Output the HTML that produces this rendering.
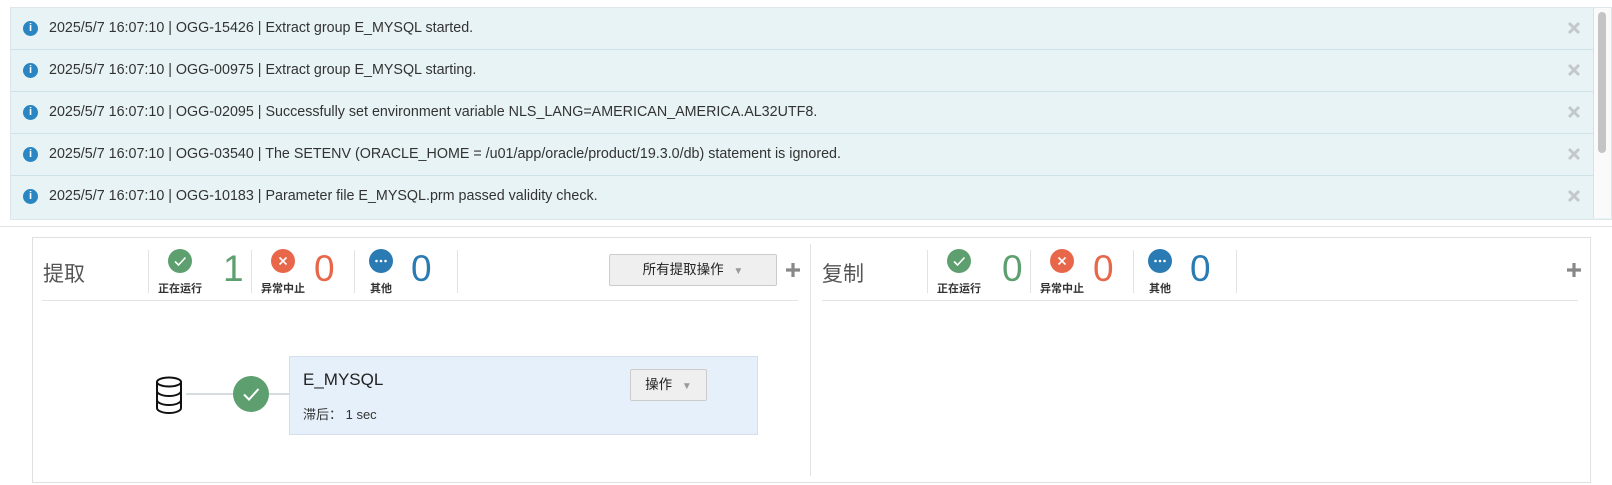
<!DOCTYPE html>
<html><head><meta charset="utf-8"><style>
body{margin:0;width:1612px;height:485px;background:#fff;position:relative;overflow:hidden;font-family:"Liberation Sans","Noto Sans CJK SC",sans-serif;color:#333}
.a{position:absolute}
.row{position:absolute;left:11px;width:1582px;height:41px;border-bottom:1px solid #cfe2e7;background:#e8f3f6}
.row .t{position:absolute;left:38px;top:12px;font-size:14.3px;color:#333;white-space:nowrap}
.row .i{position:absolute;left:12px;top:13px;width:15px;height:15px;border-radius:50%;background:#2a86c3;color:#fff;font:bold 11px/15px "Liberation Sans",sans-serif;text-align:center}
.row .x{position:absolute;left:1556px;top:13px}
.hd{font-size:21px;color:#555}
.dv{position:absolute;width:1px;background:#e2e2e2;top:250px;height:43px}
.ci{position:absolute;width:24px;height:24px;border-radius:50%;top:249px}
.lb{position:absolute;top:280px;font-size:11px;font-weight:bold;color:#333;width:60px;text-align:center}
.num{position:absolute;top:248px;font-size:37px;font-weight:300}
</style></head><body>
<div class="a" style="left:10px;top:7px;width:1600px;height:211px;border:1px solid #dde7ea;background:#e8f3f6"></div>
<div class="a" style="left:1593px;top:8px;width:17px;height:210px;background:#fafafa;border-left:1px solid #dde"></div>
<div class="a" style="left:1598px;top:12px;width:8px;height:141px;border-radius:4px;background:#c4c4c4"></div>
<div class="row" style="top:8px"><div class="i">i</div><div class="t">2025/5/7 16:07:10 | OGG-15426 | Extract group E_MYSQL started.</div><svg class="x" width="14" height="14"><path d="M2 2L12 12M12 2L2 12" stroke="#c3c8cb" stroke-width="3"/></svg></div>
<div class="row" style="top:50px"><div class="i">i</div><div class="t">2025/5/7 16:07:10 | OGG-00975 | Extract group E_MYSQL starting.</div><svg class="x" width="14" height="14"><path d="M2 2L12 12M12 2L2 12" stroke="#c3c8cb" stroke-width="3"/></svg></div>
<div class="row" style="top:92px"><div class="i">i</div><div class="t">2025/5/7 16:07:10 | OGG-02095 | Successfully set environment variable NLS_LANG=AMERICAN_AMERICA.AL32UTF8.</div><svg class="x" width="14" height="14"><path d="M2 2L12 12M12 2L2 12" stroke="#c3c8cb" stroke-width="3"/></svg></div>
<div class="row" style="top:134px"><div class="i">i</div><div class="t">2025/5/7 16:07:10 | OGG-03540 | The SETENV (ORACLE_HOME = /u01/app/oracle/product/19.3.0/db) statement is ignored.</div><svg class="x" width="14" height="14"><path d="M2 2L12 12M12 2L2 12" stroke="#c3c8cb" stroke-width="3"/></svg></div>
<div class="row" style="top:176px;border-bottom:none"><div class="i">i</div><div class="t">2025/5/7 16:07:10 | OGG-10183 | Parameter file E_MYSQL.prm passed validity check.</div><svg class="x" width="14" height="14"><path d="M2 2L12 12M12 2L2 12" stroke="#c3c8cb" stroke-width="3"/></svg></div>
<div class="a" style="left:0;top:226px;width:1612px;height:1px;background:#e3e3e3"></div>

<div class="a" style="left:32px;top:237px;width:1557px;height:244px;border:1px solid #e0e0e0"></div>
<div class="a" style="left:810px;top:244px;width:1px;height:232px;background:#e3e3e3"></div>
<div class="a" style="left:42px;top:300px;width:756px;height:1px;background:#e3e3e3"></div>
<div class="a" style="left:822px;top:300px;width:756px;height:1px;background:#e3e3e3"></div>

<div class="a hd" style="left:43px;top:258px">提取</div>
<div class="dv" style="left:148px"></div>
<div class="ci" style="left:168px;background:#5d9f6e"><svg width="24" height="24"><path d="M7 12.5L10.5 16L17.5 8.5" stroke="#fff" stroke-width="1.6" fill="none"/></svg></div>
<div class="lb" style="left:150px">正在运行</div>
<div class="num" style="left:223px;color:#5d9f6e">1</div>
<div class="dv" style="left:251px"></div>
<div class="ci" style="left:271px;background:#e8674a"><svg width="24" height="24"><path d="M8.5 8.5L15.5 15.5M15.5 8.5L8.5 15.5" stroke="#fff" stroke-width="1.6"/></svg></div>
<div class="lb" style="left:253px">异常中止</div>
<div class="num" style="left:314px;color:#e8674a">0</div>
<div class="dv" style="left:354px"></div>
<div class="ci" style="left:369px;background:#2a7ab3"><svg width="24" height="24"><circle cx="7.5" cy="12" r="1.3" fill="#fff"/><circle cx="12" cy="12" r="1.3" fill="#fff"/><circle cx="16.5" cy="12" r="1.3" fill="#fff"/></svg></div>
<div class="lb" style="left:351px">其他</div>
<div class="num" style="left:411px;color:#2a7ab3">0</div>
<div class="dv" style="left:457px"></div>
<div class="a" style="left:609px;top:254px;width:166px;height:30px;border:1px solid #ccc;border-radius:2px;background:#efefef;font-size:13.5px;line-height:30px;text-align:center;color:#222">所有提取操作 <span style="color:#999;font-size:10px;margin-left:6px">▼</span></div>
<svg class="a" style="left:785px;top:262px" width="16" height="16"><path d="M8 1V15M1 8H15" stroke="#888" stroke-width="3.2"/></svg>

<div class="a hd" style="left:822px;top:258px">复制</div>
<div class="dv" style="left:927px"></div>
<div class="ci" style="left:947px;background:#5d9f6e"><svg width="24" height="24"><path d="M7 12.5L10.5 16L17.5 8.5" stroke="#fff" stroke-width="1.6" fill="none"/></svg></div>
<div class="lb" style="left:929px">正在运行</div>
<div class="num" style="left:1002px;color:#5d9f6e">0</div>
<div class="dv" style="left:1030px"></div>
<div class="ci" style="left:1050px;background:#e8674a"><svg width="24" height="24"><path d="M8.5 8.5L15.5 15.5M15.5 8.5L8.5 15.5" stroke="#fff" stroke-width="1.6"/></svg></div>
<div class="lb" style="left:1032px">异常中止</div>
<div class="num" style="left:1093px;color:#e8674a">0</div>
<div class="dv" style="left:1133px"></div>
<div class="ci" style="left:1148px;background:#2a7ab3"><svg width="24" height="24"><circle cx="7.5" cy="12" r="1.3" fill="#fff"/><circle cx="12" cy="12" r="1.3" fill="#fff"/><circle cx="16.5" cy="12" r="1.3" fill="#fff"/></svg></div>
<div class="lb" style="left:1130px">其他</div>
<div class="num" style="left:1190px;color:#2a7ab3">0</div>
<div class="dv" style="left:1236px"></div>
<svg class="a" style="left:1566px;top:262px" width="16" height="16"><path d="M8 1V15M1 8H15" stroke="#888" stroke-width="3.2"/></svg>

<svg class="a" style="left:155px;top:376px" width="30" height="38"><g fill="#fff" stroke="#111" stroke-width="2"><path d="M2 6V32C2 35 8 37 14 37S26 35 26 32V6"/><ellipse cx="14" cy="6" rx="12" ry="4.5"/><path d="M2 15C2 18 8 20 14 20S26 18 26 15M2 24C2 27 8 29 14 29S26 27 26 24" fill="none"/></g></svg>
<div class="a" style="left:186px;top:393px;width:103px;height:2px;background:#d5dde0"></div>
<div class="a" style="left:233px;top:376px;width:36px;height:36px;border-radius:50%;background:#5d9f6e"><svg width="36" height="36"><path d="M11 18.5L16 23.5L25.5 13" stroke="#fff" stroke-width="2" fill="none"/></svg></div>
<div class="a" style="left:289px;top:356px;width:467px;height:77px;background:#e5f0fa;border:1px solid #d3e0ec"></div>
<div class="a" style="left:303px;top:370px;font-size:17px;color:#222">E_MYSQL</div>
<div class="a" style="left:303px;top:404px;font-size:13px;color:#333">滞后：&nbsp;1 sec</div>
<div class="a" style="left:630px;top:369px;width:75px;height:30px;border:1px solid #ccc;border-radius:2px;background:#efefef;font-size:13.5px;line-height:30px;text-align:center;color:#222">操作 <span style="color:#999;font-size:10px;margin-left:6px">▼</span></div>
</body></html>
